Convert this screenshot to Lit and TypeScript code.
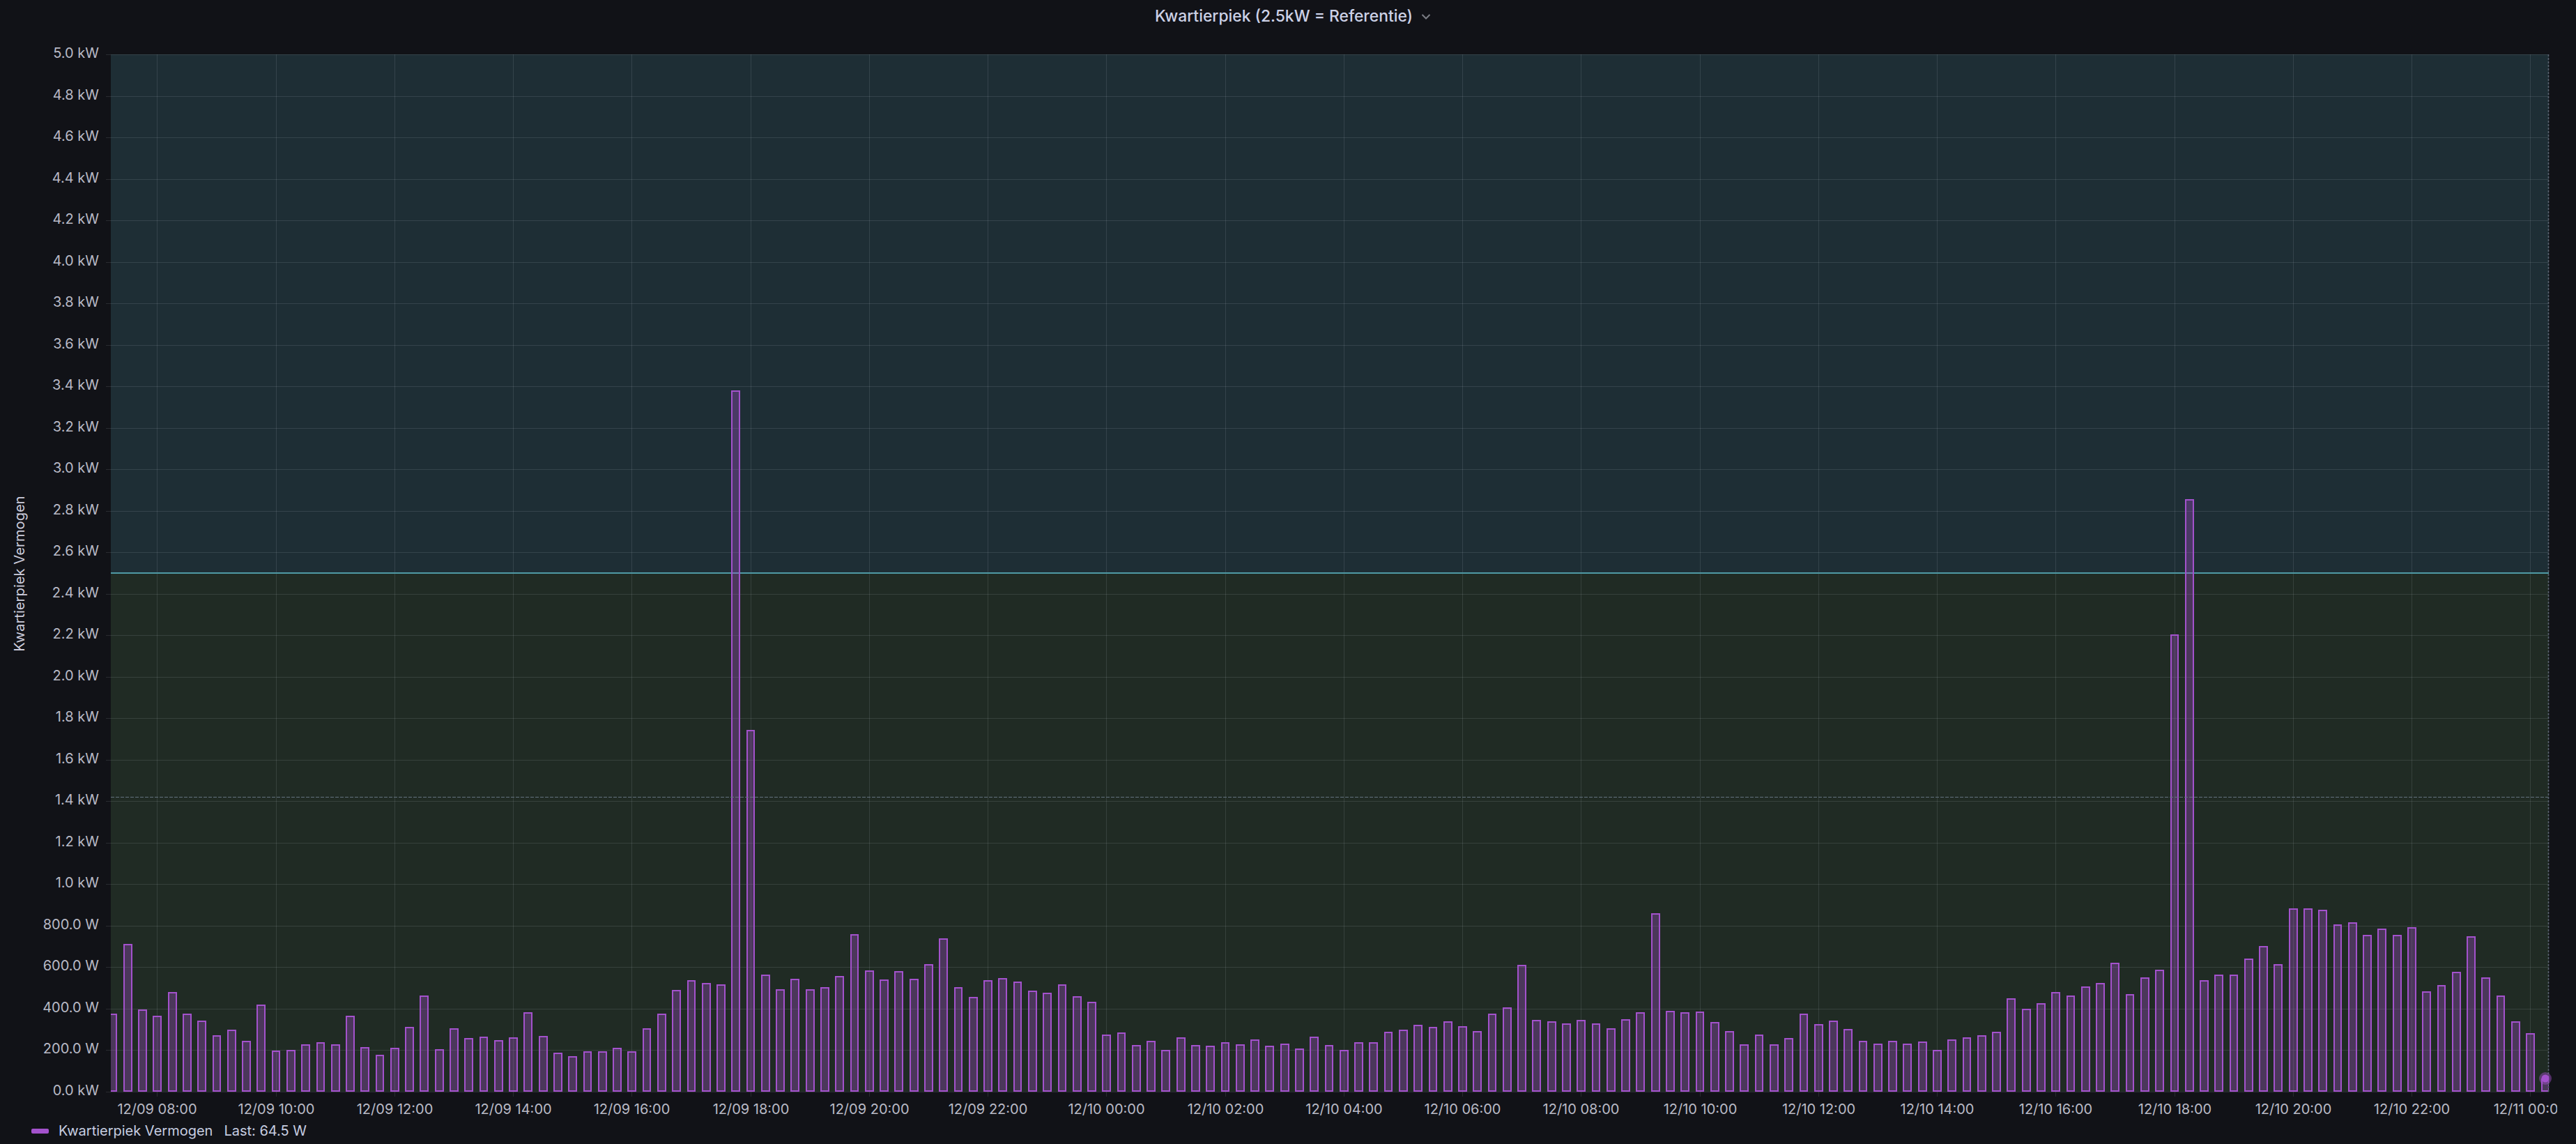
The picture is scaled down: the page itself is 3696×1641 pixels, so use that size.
import { LitElement, html, svg, css } from "lit";
import { customElement } from "lit/decorators.js";

const PLOT_LEFT = 159;
const PLOT_RIGHT = 3657;
const PLOT_TOP = 78;
const PLOT_BOTTOM = 1566;
const PX_PER_WATT = (PLOT_BOTTOM - PLOT_TOP) / 5000;
const BAR_ORIGIN = 162;
const BAR_STEP = 21.28;
const BAR_WIDTH = 12.8;
const GRID_ORIGIN = 225.3;
const GRID_STEP = 170.25;

/* Quarter-hour peak power in watts, newest last. */
const WATTS = [
  378, 712, 398, 365, 480, 378, 342, 271, 298, 244, 419, 197, 200, 230, 240, 227, 365, 214, 177, 211,
  311, 463, 204, 305, 258, 265, 248, 262, 382, 268, 187, 170, 194, 194, 211, 194, 305, 375, 489, 537,
  523, 517, 3380, 1743, 563, 493, 543, 493, 503, 557, 758, 583, 540, 580, 543, 614, 738, 503, 456, 537,
  547, 530, 486, 476, 517, 459, 432, 274, 284, 224, 244, 200, 261, 224, 221, 237, 227, 251, 221, 231,
  207, 267, 224, 200, 237, 237, 288, 298, 321, 311, 338, 315, 291, 375, 405, 610, 345, 338, 328, 345,
  328, 305, 348, 382, 860, 389, 382, 385, 335, 291, 227, 274, 227, 258, 375, 325, 342, 301, 244, 231,
  244, 231, 241, 200, 251, 261, 271, 288, 449, 399, 426, 480, 463, 506, 523, 621, 472, 550, 587, 2205,
  2855, 537, 563, 563, 641, 701, 614, 883, 883, 876, 805, 815, 755, 785, 755, 792, 483, 513, 577, 748,
  550, 463, 338, 281, 64.5,
];

const yLabel = (k: number) => {
  const w = k * 200;
  return w < 1000 && w > 0 ? `${w.toFixed(1)} W` : `${(w / 1000).toFixed(1)} kW`;
};

const X_LABELS = Array.from({ length: 21 }, (_, i) => {
  const hours = 8 + i * 2;
  const day = 9 + Math.floor(hours / 24);
  return `12/${String(day).padStart(2, "0")} ${String(hours % 24).padStart(2, "0")}:00`;
});

@customElement("app-root")
export class AppRoot extends LitElement {
  static styles = css`
    :host {
      display: flex;
      flex-direction: column;
      height: 100vh;
      overflow: hidden;
      background: #111217;
      color: #ccccdc;
      font-family: Inter, "Noto Sans", sans-serif;
    }
    .title {
      flex: none;
      height: 46px;
      display: flex;
      align-items: center;
      justify-content: center;
      gap: 12px;
      padding-left: 14px;
      font-size: 22.85px;
      font-weight: 500;
      color: #ccd1e6;
    }
    .chevron {
      width: 14px;
      height: 10px;
      margin-top: 2px;
      fill: none;
      stroke: #7b7d85;
      stroke-width: 2;
    }
    .chart {
      flex: none;
      display: block;
    }
    .tick-label {
      fill: #b9bac6;
      font-size: 20px;
    }
    .end {
      text-anchor: end;
    }
    .middle {
      text-anchor: middle;
    }
    .axis-title {
      fill: #ccccdc;
      font-size: 20.2px;
      text-anchor: middle;
    }
    .zone-high {
      fill: #1e2e35;
    }
    .zone-low {
      fill: #202b24;
    }
    .grid {
      stroke: rgba(240, 250, 255, 0.11);
      stroke-width: 1;
    }
    .threshold {
      stroke: #4f9aa5;
      stroke-width: 2;
    }
    .bar {
      fill: rgba(163, 82, 204, 0.33);
      stroke: #a352cc;
      stroke-width: 2;
    }
    .cursor-h {
      stroke: #64727e;
      stroke-width: 1;
      stroke-dasharray: 5 2;
    }
    .cursor-v {
      stroke: #5a6370;
      stroke-width: 1.6;
      stroke-dasharray: 3 2;
    }
    .halo {
      fill: rgba(163, 82, 204, 0.45);
    }
    .dot {
      fill: #a352cc;
    }
    .legend {
      flex: none;
      height: 37px;
      box-sizing: border-box;
      padding: 6px 0 0 45px;
      font-size: 20px;
      line-height: 24px;
      color: #c6cde0;
    }
    .legend-row {
      display: flex;
      align-items: center;
      height: 24px;
    }
    .swatch {
      width: 25px;
      height: 7px;
      border-radius: 2px;
      background: #a352cc;
      margin-right: 14px;
    }
    .last {
      margin-left: 16px;
    }
  `;

  private bars() {
    return WATTS.map((w, i) => {
      const c = BAR_ORIGIN + i * BAR_STEP;
      const left = Math.round(c - BAR_WIDTH / 2);
      const right = Math.round(c + BAR_WIDTH / 2);
      const top = Math.round(PLOT_BOTTOM - w * PX_PER_WATT);
      return svg`<rect class="bar" x=${left + 1} y=${top + 1} width=${right - left - 2} height=${PLOT_BOTTOM - top - 2}></rect>`;
    });
  }

  private axes() {
    const rows = Array.from({ length: 26 }, (_, k) => k);
    return svg`
      ${rows.map((k) => {
        const y = Math.round(PLOT_BOTTOM - k * 200 * PX_PER_WATT) + 0.5;
        return svg`
          <line class="grid" x1="152" x2=${PLOT_RIGHT} y1=${y} y2=${y}></line>
          <text class="tick-label end" x="142" y=${y + 4.5}>${yLabel(k)}</text>`;
      })}
      ${X_LABELS.map((label, i) => {
        const x = Math.round(GRID_ORIGIN + i * GRID_STEP) + 0.5;
        return svg`
          <line class="grid" x1=${x} x2=${x} y1=${PLOT_TOP} y2="1573"></line>
          <text class="tick-label middle" x=${x} y="1598">${label}</text>`;
      })}`;
  }

  render() {
    const thresholdY = PLOT_BOTTOM - 2500 * PX_PER_WATT;
    return html`
      <div class="title">
        <span>Kwartierpiek (2.5kW = Referentie)</span>
        <svg class="chevron" viewBox="0 0 14 10"><polyline points="1.5,2 7,7.5 12.5,2"></polyline></svg>
      </div>
      <svg class="chart" width="3669" height="1558" viewBox="0 46 3669 1558">
        <defs>
          <clipPath id="plot">
            <rect x=${PLOT_LEFT} y=${PLOT_TOP} width=${PLOT_RIGHT - PLOT_LEFT} height=${PLOT_BOTTOM - PLOT_TOP}></rect>
          </clipPath>
        </defs>
        <rect class="zone-high" x=${PLOT_LEFT} y=${PLOT_TOP} width=${PLOT_RIGHT - PLOT_LEFT} height=${thresholdY - PLOT_TOP}></rect>
        <rect class="zone-low" x=${PLOT_LEFT} y=${thresholdY} width=${PLOT_RIGHT - PLOT_LEFT} height=${PLOT_BOTTOM - thresholdY}></rect>
        ${this.axes()}
        <line class="threshold" x1=${PLOT_LEFT} x2=${PLOT_RIGHT} y1=${thresholdY} y2=${thresholdY}></line>
        <g clip-path="url(#plot)">${this.bars()}</g>
        <line class="cursor-h" x1=${PLOT_LEFT} x2=${PLOT_RIGHT} y1="1143.5" y2="1143.5"></line>
        <line class="cursor-v" x1="3656.5" x2="3656.5" y1=${PLOT_TOP} y2=${PLOT_BOTTOM}></line>
        <circle class="halo" cx="3652" cy="1547" r="9"></circle>
        <circle class="dot" cx="3652" cy="1547" r="5.5"></circle>
        <text class="axis-title" transform="translate(35 823) rotate(-90)">Kwartierpiek Vermogen</text>
      </svg>
      <div class="legend">
        <div class="legend-row">
          <span class="swatch"></span>
          <span>Kwartierpiek Vermogen</span>
          <span class="last">Last: 64.5 W</span>
        </div>
      </div>
    `;
  }
}
